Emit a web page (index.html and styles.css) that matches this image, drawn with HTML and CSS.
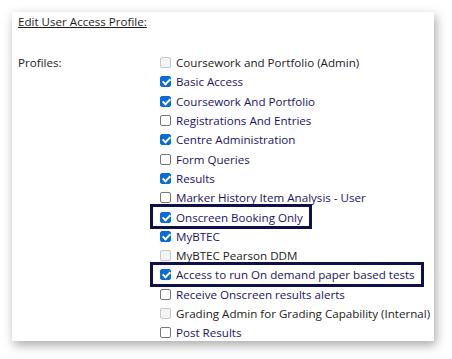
FILE: index.html
```html
<!DOCTYPE html>
<html>
<head>
<meta charset="utf-8">
<link rel="stylesheet" href="styles.css">
</head>
<body>
<div class="card">
  <div class="title">Edit User Access Profile:</div>
  <div class="form">
    <div class="label">Profiles:</div>
    <ul class="list">
      <li class="item disabled"><span class="cb"></span><span class="txt">Coursework and Portfolio (Admin)</span></li>
      <li class="item"><span class="cb on"></span><span class="txt">Basic Access</span></li>
      <li class="item"><span class="cb on"></span><span class="txt">Coursework And Portfolio</span></li>
      <li class="item"><span class="cb"></span><span class="txt">Registrations And Entries</span></li>
      <li class="item"><span class="cb on"></span><span class="txt">Centre Administration</span></li>
      <li class="item"><span class="cb"></span><span class="txt">Form Queries</span></li>
      <li class="item"><span class="cb on"></span><span class="txt">Results</span></li>
      <li class="item"><span class="cb"></span><span class="txt">Marker History Item Analysis - User</span></li>
      <li class="item hl"><span class="cb on"></span><span class="txt">Onscreen Booking Only</span></li>
      <li class="item"><span class="cb on"></span><span class="txt">MyBTEC</span></li>
      <li class="item disabled"><span class="cb"></span><span class="txt">MyBTEC Pearson DDM</span></li>
      <li class="item hl"><span class="cb on"></span><span class="txt">Access to run On demand paper based tests</span></li>
      <li class="item"><span class="cb"></span><span class="txt">Receive Onscreen results alerts</span></li>
      <li class="item disabled"><span class="cb"></span><span class="txt">Grading Admin for Grading Capability (Internal)</span></li>
      <li class="item"><span class="cb"></span><span class="txt">Post Results</span></li>
    </ul>
  </div>
</div>
</body>
</html>
```
FILE: styles.css
```css
html, body {
  margin: 0;
  padding: 0;
  background: #ffffff;
}
body {
  width: 452px;
  height: 359px;
  overflow: hidden;
  font-family: "Open Sans", "Liberation Sans", sans-serif;
  font-size: 11.6px;
  color: #222222;
}
.card {
  margin: 12px 0 0 12px;
  width: 422px;
  height: 329px;
  box-sizing: border-box;
  background: #fff;
  box-shadow: 2px 4px 10px rgba(0,0,0,0.35);
  padding: 0 0 0 6px;
}
.title {
  text-decoration: underline;
  line-height: 18px;
  padding-top: 1px;
  color: #1e1e1e;
}
.form {
  display: flex;
  margin-top: 22px;
}
.label {
  width: 142px;
  flex: none;
  line-height: 18px;
  padding-top: 1px;
}
.list {
  list-style: none;
  margin: 0;
  padding: 0;
}
.item {
  display: flex;
  align-items: center;
  width: fit-content;
  height: 19.3px;
  color: #1b1464;
  white-space: nowrap;
  position: relative;
}
.item.disabled { color: #222; }
.cb {
  width: 11px;
  height: 11px;
  box-sizing: border-box;
  border: 1px solid #767676;
  border-radius: 2px;
  background: #fff;
  margin-right: 5px;
  flex: none;
  position: relative;
}
.disabled .cb {
  border-color: #c8c8c8;
  background: #f4f4f4;
}
.cb.on {
  background: #0a6cd6;
  border-color: #0a6cd6;
}
.cb.on::after {
  content: "";
  position: absolute;
  left: 3px;
  top: 0px;
  width: 3px;
  height: 6px;
  border: solid #fff;
  border-width: 0 2px 2px 0;
  transform: rotate(45deg);
}
.hl::before {
  content: "";
  position: absolute;
  left: -10px;
  right: -9px;
  top: -3px;
  bottom: -2px;
  border: 3px solid #0f0f4a;
}
```
